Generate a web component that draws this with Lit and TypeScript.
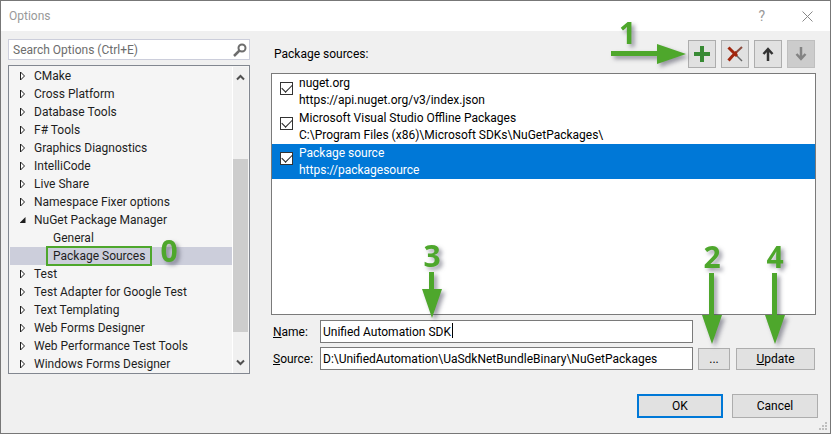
import { LitElement, html, css, svg } from "lit";
import { customElement, property, state } from "lit/decorators.js";
import { classMap } from "lit/directives/class-map.js";

interface TreeNode {
  label: string;
  level: number;
  open?: boolean;
  selected?: boolean;
}

interface PackageSource {
  name: string;
  url: string;
  enabled: boolean;
}

const TREE: TreeNode[] = [
  { label: "CMake", level: 0 },
  { label: "Cross Platform", level: 0 },
  { label: "Database Tools", level: 0 },
  { label: "F# Tools", level: 0 },
  { label: "Graphics Diagnostics", level: 0 },
  { label: "IntelliCode", level: 0 },
  { label: "Live Share", level: 0 },
  { label: "Namespace Fixer options", level: 0 },
  { label: "NuGet Package Manager", level: 0, open: true },
  { label: "General", level: 1 },
  { label: "Package Sources", level: 1, selected: true },
  { label: "Test", level: 0 },
  { label: "Test Adapter for Google Test", level: 0 },
  { label: "Text Templating", level: 0 },
  { label: "Web Forms Designer", level: 0 },
  { label: "Web Performance Test Tools", level: 0 },
  { label: "Windows Forms Designer", level: 0 },
];

const base = css`
  * {
    box-sizing: border-box;
  }
  button,
  input {
    font: inherit;
    color: inherit;
    margin: 0;
    border-radius: 0;
  }
  svg {
    display: block;
  }
`;

/* Green step number with an optional arrow. */
@customElement("step-mark")
export class StepMark extends LitElement {
  @property() step = "";
  @property() arrow: "none" | "right" | "down" = "none";
  @property({ type: Number }) length = 0;

  static styles = css`
    :host {
      display: flex;
      flex-direction: column;
      align-items: center;
      pointer-events: none;
      filter: drop-shadow(3px 3px 2px rgba(60, 60, 80, 0.5));
    }
    :host([arrow="right"]) {
      align-items: flex-start;
    }
    :host([arrow="right"]) .num {
      margin: 0 0 -5px 8px;
    }
    .num {
      font: 700 30px/32px "Open Sans", sans-serif;
      color: #4ea72c;
    }
    svg {
      display: block;
      fill: #4ea72c;
    }
  `;

  render() {
    const n = this.length;
    return html`<span class="num">${this.step}</span>
      ${this.arrow === "down"
        ? html`<svg width="20" height=${n} viewBox="0 0 20 ${n}">
            ${svg`<path d="M7 0h5v${n - 29}h8L10 ${n}L0 ${n - 29}h7z"/>`}
          </svg>`
        : this.arrow === "right"
          ? html`<svg width=${n} height="20" viewBox="0 0 ${n} 20">
              ${svg`<path d="M0 7h${n - 29}V0L${n} 10L${n - 29} 20V12H0z"/>`}
            </svg>`
          : ""}`;
  }
}

@customElement("options-tree")
export class OptionsTree extends LitElement {
  static styles = [
    base,
    css`
      :host {
        display: flex;
        border: 1px solid #828790;
        background: #f5f5f5;
        padding: 1px 1px 0;
        color: #1e1e1e;
      }
      ul {
        flex: 1;
        min-width: 0;
        list-style: none;
        margin: 0;
        padding: 0;
      }
      li {
        display: flex;
        align-items: center;
        height: 18px;
        padding-left: 10px;
        white-space: nowrap;
      }
      .tick {
        width: 14px;
      }
      .child {
        padding-left: 38px;
      }
      .selected {
        background: #cccedb;
      }
      .label {
        position: relative;
      }
      .child .label {
        padding: 0 5px;
        line-height: 16px;
      }
      .selected .label {
        outline: 2px solid #4ea72c;
      }
      step-mark {
        position: absolute;
        left: 100%;
        top: -13px;
        margin-left: 10px;
      }
      .bar {
        width: 15px;
        display: flex;
        flex-direction: column;
        align-items: center;
        background: #f0f0f0;
        box-shadow: -1px 0 #fff;
        padding: 6px 0;
      }
      .track {
        flex: 1;
        width: 15px;
        display: flex;
        flex-direction: column;
        padding: 78px 0 27px;
      }
      .thumb {
        flex: 1;
        background: #cdcdcd;
      }
    `,
  ];

  render() {
    return html`<ul role="tree">
        ${TREE.map(
          (n) => html`<li
            role="treeitem"
            aria-selected=${n.selected ? "true" : "false"}
            class=${classMap({ child: n.level === 1, selected: !!n.selected })}
          >
            ${n.level === 0
              ? html`<svg class="tick" width="14" height="10" viewBox="0 0 14 10">
                  ${n.open
                    ? svg`<path d="M5.500 2v6h-6z" fill="#1e1e1e"/>`
                    : svg`<path d="M.5 1v8l4-4z" fill="#fff" stroke="#1e1e1e"/>`}
                </svg>`
              : ""}
            <span class="label"
              >${n.label}${n.selected ? html`<step-mark step="0"></step-mark>` : ""}</span
            >
          </li>`
        )}
      </ul>
      <div class="bar">
        <svg width="9" height="8" viewBox="0 0 9 8">
          <path d="M1 6.500L4.500 3L8 6.500" fill="none" stroke="#505050" stroke-width="2" />
        </svg>
        <div class="track"><div class="thumb"></div></div>
        <svg width="9" height="8" viewBox="0 0 9 8">
          <path d="M1 1.500L4.500 5L8 1.500" fill="none" stroke="#505050" stroke-width="2" />
        </svg>
      </div>`;
  }
}

@customElement("package-sources")
export class PackageSources extends LitElement {
  @state() private sources: PackageSource[] = [
    { name: "nuget.org", url: "https://api.nuget.org/v3/index.json", enabled: true },
    {
      name: "Microsoft Visual Studio Offline Packages",
      url: "C:\\Program Files (x86)\\Microsoft SDKs\\NuGetPackages\\",
      enabled: true,
    },
    { name: "Package source", url: "https://packagesource", enabled: true },
  ];
  @state() private current = 2;

  static styles = [
    base,
    css`
      :host {
        display: flex;
        flex-direction: column;
        min-width: 0;
      }
      .head {
        display: flex;
        align-items: center;
        justify-content: space-between;
        padding: 1px 1px 5px 3px;
      }
      .tools {
        position: relative;
        display: flex;
        gap: 5px;
      }
      .tools button {
        width: 28px;
        height: 28px;
        padding: 0;
        display: grid;
        place-items: center;
      }
      button {
        background: #e1e1e1;
        border: 1px solid #adadad;
      }
      button:disabled {
        background: #cccccc;
        border-color: #bfbfbf;
      }
      .tools step-mark {
        position: absolute;
        right: 100%;
        bottom: 4px;
        margin-right: 2px;
      }
      ul {
        margin: 0;
        padding: 0;
        list-style: none;
        background: #fff;
        border: 1px solid #7a7a7a;
        min-height: 242px;
      }
      label.item {
        display: flex;
        align-items: flex-start;
        gap: 6px;
        height: 35px;
        padding-left: 8px;
        line-height: 17px;
        white-space: nowrap;
      }
      .item span {
        display: block;
      }
      .text {
        padding-top: 1px;
      }
      .on {
        background: #0078d7;
        color: #fff;
      }
      input[type="checkbox"] {
        appearance: none;
        width: 13px;
        height: 13px;
        margin-top: 8px;
        border: 1px solid #333;
        background: #fff;
        display: grid;
        place-items: center;
      }
      input[type="checkbox"]:checked::before {
        content: "";
        width: 9px;
        height: 5px;
        margin-bottom: 3px;
        border-left: 1px solid #222;
        border-bottom: 1px solid #222;
        transform: rotate(-45deg);
      }
      .form {
        display: grid;
        grid-template-columns: 42px 1fr 32px 80px;
        gap: 4px 5px;
        align-items: center;
        padding: 5px 1px 0 2px;
      }
      .field {
        position: relative;
        display: flex;
      }
      .field input {
        width: 100%;
        height: 23px;
        padding: 0 2px;
        border: 1px solid #7a7a7a;
        background: #fff;
      }
      .update {
        margin-left: 1px;
      }
      .caret {
        position: absolute;
        left: 132px;
        top: 3px;
        width: 1px;
        height: 15px;
        background: #000;
      }
      .field step-mark {
        position: absolute;
        bottom: 100%;
        left: 102px;
        margin-bottom: 2px;
      }
      .gap {
        grid-column: span 2;
      }
      .anchor {
        position: relative;
        display: grid;
      }
      .anchor step-mark {
        position: absolute;
        bottom: 100%;
        left: 4px;
        margin-bottom: 4px;
      }
      .anchor.wide step-mark {
        left: 30px;
      }
      .anchor button {
        height: 22px;
        padding: 0;
      }
    `,
  ];

  private toggle(i: number) {
    this.sources = this.sources.map((s, k) => (k === i ? { ...s, enabled: !s.enabled } : s));
    this.current = i;
  }

  render() {
    return html`<div class="head">
        <span>Package sources:</span>
        <div class="tools">
          <button aria-label="Add">
            <svg width="16" height="16" viewBox="0 0 16 16">
              <path d="M6 0h4v6h6v4h-6v6H6v-6H0V6h6z" fill="#388a34" />
            </svg>
          </button>
          <button aria-label="Remove">
            <svg width="16" height="16" viewBox="0 0 16 16">
              <path d="M7 7L15 15" stroke="#666" stroke-width="1.500" />
              <path d="M1.500 1.500L10 10" stroke="#a1260d" stroke-width="3" />
              <path d="M15 1L8 7.500" stroke="#8a4a3c" stroke-width="2" />
              <path d="M9.500 6L5 10.500L1.500 14.500" fill="none" stroke="#a1260d" stroke-width="3" />
            </svg>
          </button>
          <button aria-label="Move up">
            <svg width="12" height="14" viewBox="0 0 12 14">
              <path d="M6 14V2M1.500 7L6 2L10.500 7" fill="none" stroke="#333" stroke-width="2.500" />
            </svg>
          </button>
          <button aria-label="Move down" disabled>
            <svg width="12" height="14" viewBox="0 0 12 14">
              <path d="M6 0V12M1.500 7L6 12L10.500 7" fill="none" stroke="#838383" stroke-width="2.500" />
            </svg>
          </button>
          <step-mark step="1" arrow="right" length="75"></step-mark>
        </div>
      </div>
      <ul>
        ${this.sources.map(
          (s, i) => html`<li>
            <label class=${classMap({ item: true, on: i === this.current })}>
              <input type="checkbox" .checked=${s.enabled} @change=${() => this.toggle(i)} />
              <span class="text"><span>${s.name}</span><span>${s.url}</span></span>
            </label>
          </li>`
        )}
      </ul>
      <div class="form">
        <label for="name"><u>N</u>ame:</label>
        <div class="field">
          <input id="name" type="text" value="Unified Automation SDK" />
          <i class="caret"></i>
          <step-mark step="3" arrow="down" length="46"></step-mark>
        </div>
        <div class="gap"></div>
        <label for="source"><u>S</u>ource:</label>
        <div class="field">
          <input
            id="source"
            type="text"
            value="D:\\UnifiedAutomation\\UaSdkNetBundleBinary\\NuGetPackages"
          />
        </div>
        <div class="anchor">
          <button aria-label="Browse">...</button>
          <step-mark step="2" arrow="down" length="71"></step-mark>
        </div>
        <div class="anchor wide">
          <button class="update"><u>U</u>pdate</button>
          <step-mark step="4" arrow="down" length="71"></step-mark>
        </div>
      </div>`;
  }
}

@customElement("app-root")
export class AppRoot extends LitElement {
  static styles = [
    base,
    css`
      :host {
        display: flex;
        flex-direction: column;
        min-height: 100vh;
        box-sizing: border-box;
        border: 1px solid #777;
        background: #f0f0f0;
        color: #000;
        font: 12px/16px Roboto, "Open Sans", sans-serif;
      }
      header {
        display: flex;
        align-items: center;
        height: 30px;
        padding: 0 17px 0 8px;
        background: #fff;
        color: #999;
      }
      h1 {
        flex: 1;
        margin: 0;
        font-size: 12px;
        font-weight: 400;
      }
      header button {
        border: 0;
        background: none;
        padding: 0;
        font-size: 14px;
      }
      .close {
        margin-left: 37px;
      }
      main {
        display: grid;
        grid-template-columns: 242px minmax(0, 1fr);
        align-items: start;
        gap: 21px;
        padding: 8px 14px 0 7px;
      }
      .left {
        display: flex;
        flex-direction: column;
        gap: 5px;
      }
      .search {
        display: flex;
        align-items: center;
        height: 21px;
        border: 1px solid #cccedb;
        background: #fff;
        padding: 0 2px 0 4px;
      }
      .search input {
        flex: 1;
        min-width: 0;
        border: 0;
        padding: 0;
        background: none;
        outline: 0;
      }
      .search input::placeholder {
        color: #6d6d6d;
        opacity: 1;
      }
      footer {
        position: relative;
        display: flex;
        justify-content: flex-end;
        gap: 9px;
        padding: 20px 12px 14px;
      }
      footer button {
        width: 86px;
        height: 24px;
        padding: 0;
        background: #e1e1e1;
        border: 1px solid #adadad;
      }
      footer .ok {
        border: 2px solid #0078d7;
      }
      .grip {
        position: absolute;
        right: 2px;
        bottom: 1px;
        fill: #bfbfbf;
      }
    `,
  ];

  render() {
    return html`<header>
        <h1>Options</h1>
        <button aria-label="Help">?</button>
        <button class="close" aria-label="Close">
          <svg width="11" height="11" viewBox="0 0 11 11">
            <path d="M.5.5l10 10M10.500.5l-10 10" stroke="#888" />
          </svg>
        </button>
      </header>
      <main>
        <div class="left">
          <div class="search">
            <input type="text" aria-label="Search Options" placeholder="Search Options (Ctrl+E)" />
            <svg width="14" height="14" viewBox="0 0 14 14">
              <circle cx="9" cy="5" r="3.500" fill="none" stroke="#6d6d6d" stroke-width="2" />
              <path d="M6.500 7.500L1 13" stroke="#6d6d6d" stroke-width="2.500" />
            </svg>
          </div>
          <options-tree></options-tree>
        </div>
        <package-sources></package-sources>
      </main>
      <footer>
        <button class="ok">OK</button>
        <button>Cancel</button>
        <svg class="grip" width="9" height="9" viewBox="0 0 9 9">
          <path d="M6 0h2v2h-2zM3 3h2v2h-2zM6 3h2v2h-2zM0 6h2v2h-2zM3 6h2v2h-2zM6 6h2v2h-2z" />
        </svg>
      </footer>`;
  }
}
